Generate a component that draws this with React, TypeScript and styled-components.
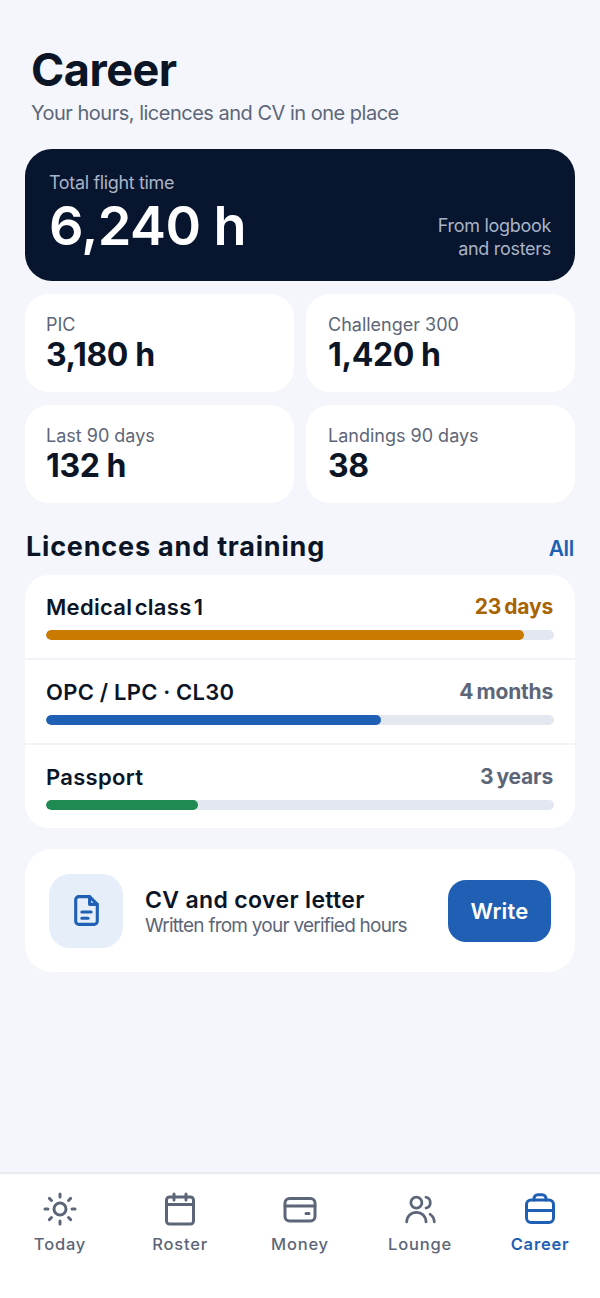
import React, { FC, ReactNode } from 'react'
import styled, { createGlobalStyle } from 'styled-components'

const GlobalStyle = createGlobalStyle`
  * { box-sizing: border-box; }
  html, body { margin: 0; padding: 0; }
  body {
    background: #f4f6fb;
    font-family: Inter, "Liberation Sans", sans-serif;
    color: #0b1526;
  }
`

const Screen = styled.div`
  width: 600px;
  height: 1298px;
  display: flex;
  flex-direction: column;
  background: #f4f6fb;
`

const Main = styled.main`
  flex: 1;
  padding: 41px 25px 0;
`

const Header = styled.header`
  padding-left: 6px;
  margin-bottom: 21px;
`

const Title = styled.h1`
  margin: 0 0 2px;
  font-size: 45px;
  line-height: 57px;
  font-weight: 700;
  letter-spacing: -0.5px;
  color: #0b1526;
`

const Subtitle = styled.p`
  margin: -1px 0 0;
  font-size: 20px;
  line-height: 29px;
  letter-spacing: -0.5px;
  color: #5d6678;
`

const Hero = styled.section`
  height: 132px;
  padding: 21px 24px 0;
  border-radius: 27px;
  background: #07152e;
  display: flex;
  justify-content: space-between;
  margin-bottom: 13px;
`

const HeroLabel = styled.div`
  font-size: 18px;
  line-height: 26px;
  letter-spacing: -0.35px;
  color: #a9b3c6;
`

const HeroValue = styled.div`
  margin-top: 1px;
  font-size: 54px;
  line-height: 58px;
  font-weight: 600;
  letter-spacing: -0.6px;
  color: #ffffff;
`

const HeroNote = styled.div`
  align-self: flex-end;
  margin-bottom: 21px;
  text-align: right;
  font-size: 18px;
  line-height: 23px;
  letter-spacing: -0.3px;
  color: #a9b3c6;
`

const StatGrid = styled.div`
  display: grid;
  grid-template-columns: 1fr 1fr;
  gap: 13px 12px;
  margin-bottom: 25px;
`

const StatCard = styled.div`
  height: 98px;
  padding: 19px 21px 0 22px;
  border-radius: 24px;
  background: #ffffff;

  &:nth-child(odd) {
    padding-left: 21px;
  }
`

const StatLabel = styled.div`
  font-size: 18px;
  line-height: 24px;
  color: #5d6678;
`

const StatValue = styled.div`
  font-size: 32px;
  line-height: 36px;
  font-weight: 700;
  letter-spacing: -0.4px;
  color: #0b1526;
`

const SectionHead = styled.div`
  display: flex;
  justify-content: space-between;
  align-items: center;
  height: 36px;
  padding-left: 1px;
  margin-bottom: 11px;
`

const SectionTitle = styled.h2`
  margin: 2px 0 0;
  font-size: 27px;
  line-height: 34px;
  font-weight: 700;
  letter-spacing: 0.8px;
  color: #0b1526;
`

const SectionLink = styled.a`
  padding-top: 4px;
  margin-right: 1px;
  font-size: 21px;
  font-weight: 600;
  letter-spacing: -0.3px;
  color: #1f5fb4;
`

const ListCard = styled.section`
  border-radius: 24px;
  background: #ffffff;
  overflow: hidden;
  margin-bottom: 21px;
`

const Row = styled.div`
  height: 85px;
  padding: 18px 21px 0;
  border-bottom: 2px solid #f1f3f8;

  &:last-child {
    height: 83px;
    border-bottom: 0;
  }
`

const RowHead = styled.div`
  display: flex;
  justify-content: space-between;
  align-items: flex-start;
  margin-bottom: 8px;
  height: 29px;
`

const RowName = styled.span<{ $wordGap: number }>`
  font-size: 22px;
  line-height: 29px;
  font-weight: 600;
  letter-spacing: 0.3px;
  word-spacing: ${p => p.$wordGap}px;
  color: #0b1526;
`

const RowValue = styled.span<{ $tone: string }>`
  margin: -1px 1px 0 0;
  font-size: 21px;
  line-height: 29px;
  font-weight: 700;
  letter-spacing: -0.2px;
  word-spacing: -1.5px;
  color: ${p => p.$tone};
`

const Track = styled.div`
  height: 10px;
  border-radius: 5px;
  background: #e3e7ef;
  overflow: hidden;
`

const Fill = styled.div<{ $color: string }>`
  height: 100%;
  border-radius: 5px;
  background: ${p => p.$color};
`

const CvCard = styled.section`
  height: 123px;
  padding: 0 24px;
  border-radius: 27px;
  background: #ffffff;
  display: flex;
  align-items: center;
`

const CvIcon = styled.div`
  width: 74px;
  height: 74px;
  border-radius: 21px;
  background: #e6eef9;
  color: #1f5fb4;
  display: flex;
  align-items: center;
  justify-content: center;
  margin-right: 22px;
  flex-shrink: 0;
`

const CvText = styled.div`
  flex: 1;
  margin-top: 4px;
`

const CvTitle = styled.div`
  font-size: 23px;
  line-height: 27px;
  font-weight: 600;
  letter-spacing: 0.35px;
  color: #0b1526;
`

const CvSub = styled.div`
  font-size: 19px;
  line-height: 24px;
  letter-spacing: -0.77px;
  color: #5d6678;
`

const WriteButton = styled.button`
  width: 103px;
  height: 62px;
  border: 0;
  border-radius: 18px;
  background: #1f5fb4;
  color: #ffffff;
  font-family: inherit;
  font-size: 22px;
  font-weight: 600;
  letter-spacing: 0.2px;
`

const Nav = styled.nav`
  height: 126px;
  border-top: 2px solid #e8ebf1;
  background: #ffffff;
  display: grid;
  grid-template-columns: repeat(5, 1fr);
  padding-top: 17px;
`

const NavItem = styled.a<{ $active?: boolean }>`
  display: flex;
  flex-direction: column;
  align-items: center;
  height: 70px;
  color: ${p => (p.$active ? '#1f5fb4' : '#5d6678')};
  font-size: 16.5px;
  line-height: 22px;
  font-weight: ${p => (p.$active ? 600 : 500)};
  letter-spacing: 0.8px;
`

const NavIconSlot = styled.span`
  height: 36px;
  margin-bottom: 6px;
  display: flex;
  align-items: center;
`

const Icon: FC<{ size?: number; children: ReactNode }> = ({ size = 36, children }) => (
  <svg
    width={size}
    height={size}
    viewBox="0 0 24 24"
    fill="none"
    stroke="currentColor"
    strokeWidth="2"
    strokeLinecap="round"
    strokeLinejoin="round"
  >
    {children}
  </svg>
)

const stats = [
  { label: 'PIC', value: '3,180 h' },
  { label: 'Challenger 300', value: '1,420 h' },
  { label: 'Last 90 days', value: '132 h' },
  { label: 'Landings 90 days', value: '38' },
]

const licences = [
  { name: 'Medical class 1', value: '23 days', tone: '#a86400', color: '#c97a00', pct: 94, wordGap: -3.5 },
  { name: 'OPC / LPC · CL30', value: '4 months', tone: '#5d6678', color: '#1f5fb4', pct: 66, wordGap: -0.3 },
  { name: 'Passport', value: '3 years', tone: '#5d6678', color: '#1f8a52', pct: 30, wordGap: 0 },
]

const App: FC = () => {
  return (
    <Screen>
      <GlobalStyle />
      <Main>
        <Header>
          <Title>Career</Title>
          <Subtitle>Your hours, licences and CV in one place</Subtitle>
        </Header>

        <Hero>
          <div>
            <HeroLabel>Total flight time</HeroLabel>
            <HeroValue>6,240 h</HeroValue>
          </div>
          <HeroNote>
            From logbook
            <br />
            and rosters
          </HeroNote>
        </Hero>

        <StatGrid>
          {stats.map(stat => (
            <StatCard key={stat.label}>
              <StatLabel>{stat.label}</StatLabel>
              <StatValue>{stat.value}</StatValue>
            </StatCard>
          ))}
        </StatGrid>

        <SectionHead>
          <SectionTitle>Licences and training</SectionTitle>
          <SectionLink>All</SectionLink>
        </SectionHead>

        <ListCard>
          {licences.map(item => (
            <Row key={item.name}>
              <RowHead>
                <RowName $wordGap={item.wordGap}>{item.name}</RowName>
                <RowValue $tone={item.tone}>{item.value}</RowValue>
              </RowHead>
              <Track>
                <Fill $color={item.color} style={{ width: `${item.pct}%` }} />
              </Track>
            </Row>
          ))}
        </ListCard>

        <CvCard>
          <CvIcon>
            <Icon size={37}>
              <path d="M14 3H7a2 2 0 0 0-2 2v14a2 2 0 0 0 2 2h10a2 2 0 0 0 2-2V8z" />
              <path d="M14 3v5h5" />
              <path d="M9 13h6" />
              <path d="M9 17h4" />
            </Icon>
          </CvIcon>
          <CvText>
            <CvTitle>CV and cover letter</CvTitle>
            <CvSub>Written from your verified hours</CvSub>
          </CvText>
          <WriteButton>Write</WriteButton>
        </CvCard>
      </Main>

      <Nav>
        <NavItem>
          <NavIconSlot>
            <Icon>
              <circle cx="12" cy="12" r="4" />
              <path d="M12 2v2M12 20v2M4.9 4.9l1.4 1.4M17.7 17.7l1.4 1.4M2 12h2M20 12h2M6.3 17.7l-1.4 1.4M19.1 4.9l-1.4 1.4" />
            </Icon>
          </NavIconSlot>
          Today
        </NavItem>
        <NavItem>
          <NavIconSlot>
            <Icon>
              <rect x="3" y="4" width="18" height="18" rx="2" />
              <path d="M8 2v4M16 2v4M3 9h18" />
            </Icon>
          </NavIconSlot>
          Roster
        </NavItem>
        <NavItem>
          <NavIconSlot>
            <Icon>
              <rect x="2" y="5" width="20" height="15" rx="3" />
              <path d="M2 10h20M16 15h2" />
            </Icon>
          </NavIconSlot>
          Money
        </NavItem>
        <NavItem>
          <NavIconSlot>
            <Icon size={33}>
              <circle cx="9" cy="7" r="4" />
              <path d="M2 21a7 7 0 0 1 14 0" />
              <path d="M16 3.1a4 4 0 0 1 0 7.8" />
              <path d="M22 21a6.5 6.5 0 0 0-3-5.5" />
            </Icon>
          </NavIconSlot>
          Lounge
        </NavItem>
        <NavItem $active>
          <NavIconSlot>
            <Icon>
              <rect x="3" y="6" width="18" height="15" rx="3" />
              <path d="M8 6V5a2.5 2.5 0 0 1 2.5-2.5h3A2.5 2.5 0 0 1 16 5v1" />
              <path d="M3 13h18" />
            </Icon>
          </NavIconSlot>
          Career
        </NavItem>
      </Nav>
    </Screen>
  )
}

export default App
